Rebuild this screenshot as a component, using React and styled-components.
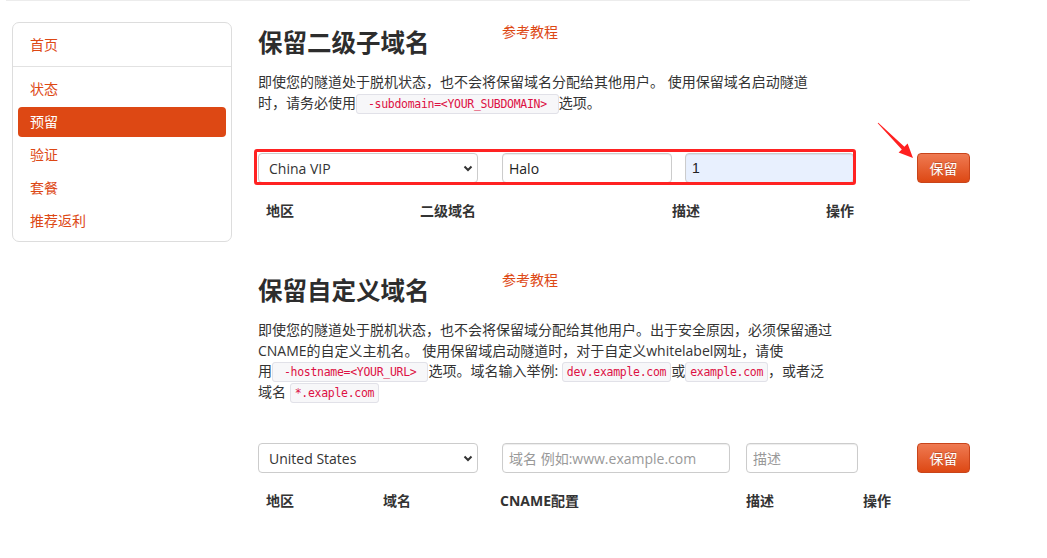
import React from 'react';
import styled, { createGlobalStyle } from 'styled-components';

const GlobalStyle = createGlobalStyle`
  body {
    margin: 0;
    background: #fff;
    color: #333;
    font-family: "Open Sans", "Noto Sans CJK SC", sans-serif;
    font-size: 14px;
  }
`;

const ORANGE = '#dd4814';

const TopLine = styled.div`
  height: 1px;
  margin-left: 6px;
  width: 964px;
  background: #ececec;
`;

const Layout = styled.div`
  display: flex;
  align-items: flex-start;
  gap: 26px;
  padding-left: 12px;
`;

const Sidebar = styled.nav`
  width: 220px;
  box-sizing: border-box;
  margin-top: 21px;
  padding: 7px 5px 5px;
  border: 1px solid #ddd;
  border-radius: 7px;
  display: flex;
  flex-direction: column;
  gap: 3px;
`;

const NavItem = styled.a`
  display: block;
  height: 30px;
  line-height: 30px;
  padding-left: 12px;
  border-radius: 4px;
  color: ${(p) => (p.$active ? '#fff' : ORANGE)};
  background: ${(p) => (p.$active ? ORANGE : 'transparent')};
  text-decoration: none;
  font-size: 14px;
`;

const NavDivider = styled.div`
  height: 1px;
  background: #e2e2e2;
  margin: 3px -5px 4px;
`;

const Main = styled.main`
  width: 712px;
`;

const SectionHead = styled.div`
  display: flex;
  align-items: flex-start;
  margin-top: ${(p) => p.$top}px;
`;

const Title = styled.h2`
  margin: 0;
  width: 244px;
  font-size: 24.5px;
  line-height: 36px;
  font-weight: 700;
  color: #2d2d2d;
`;

const GuideLink = styled.a`
  margin-top: -3px;
  line-height: 20px;
  font-size: 14px;
  color: ${ORANGE};
  text-decoration: none;
`;

const Para = styled.p`
  margin: 11px 0 0;
  width: 575px;
  line-height: 20.5px;
  font-size: 14px;
  color: #333;
`;

const Code = styled.code`
  font-family: "DejaVu Sans Mono", "Liberation Mono", monospace;
  font-size: 11.5px;
  letter-spacing: -0.3px;
  line-height: 12px;
  color: #dd1144;
  background: #f7f7f9;
  border: 1px solid #e1e1e8;
  border-radius: 3px;
  padding: 2px ${(p) => (p.$wide ? 11 : 4)}px;
  white-space: nowrap;
`;

const FormRow = styled.div`
  position: relative;
  display: flex;
  align-items: center;
  margin-top: ${(p) => p.$top}px;
  height: 30px;
`;

const SelectWrap = styled.div`
  position: relative;
  width: 220px;
  height: 30px;
  margin-right: 24px;
`;

const Select = styled.select`
  appearance: none;
  width: 100%;
  height: 30px;
  box-sizing: border-box;
  padding: 0 24px 0 10px;
  border: 1px solid #ccc;
  border-radius: 4px;
  background: #fff;
  color: #333;
  font-family: "Open Sans", "Noto Sans CJK SC", sans-serif;
  font-size: 14px;
`;

const Chevron = styled.svg`
  position: absolute;
  right: 5px;
  top: 12px;
  pointer-events: none;
`;

const Input = styled.input`
  width: ${(p) => p.$w}px;
  height: 30px;
  box-sizing: border-box;
  margin-right: ${(p) => p.$gap || 0}px;
  padding: 0 6px;
  border: 1px solid #ccc;
  border-radius: 4px;
  background: ${(p) => (p.$filled ? '#e8f0fe' : '#fff')};
  color: #222;
  font-family: ${(p) => (p.$filled ? '"Liberation Sans", Arial' : '"Open Sans"')}, "Noto Sans CJK SC", sans-serif;
  font-size: 14px;
  box-shadow: inset 0 1px 1px rgba(0, 0, 0, 0.075);
  &::placeholder {
    color: #999;
  }
`;

const SaveButton = styled.button`
  margin-left: auto;
  width: 53px;
  height: 30px;
  padding: 0;
  border: 1px solid #c9441a;
  border-radius: 4px;
  background: linear-gradient(to bottom, #ef7a52, #dd4814);
  color: #fff;
  font-family: "Noto Sans CJK SC", sans-serif;
  font-size: 14px;
  text-shadow: 0 -1px 0 rgba(0, 0, 0, 0.2);
`;

const Highlight = styled.div`
  position: absolute;
  left: -4px;
  top: -4px;
  width: 602px;
  height: 36px;
  box-sizing: border-box;
  border: 3px solid #ff2222;
  border-radius: 3px;
  pointer-events: none;
`;

const Arrow = styled.svg`
  position: absolute;
  left: 614px;
  top: -35px;
  pointer-events: none;
`;

const HeadRow = styled.div`
  display: grid;
  grid-template-columns: ${(p) => p.$cols};
  margin-top: 10px;
`;

const Th = styled.div`
  padding: 8px;
  line-height: 20px;
  font-weight: 700;
  font-size: 14px;
  color: #333;
`;

const navItems = ['状态', '预留', '验证', '套餐', '推荐返利'];

const SelectBox = ({ value }) => (
  <SelectWrap>
    <Select defaultValue={value}>
      <option>{value}</option>
    </Select>
    <Chevron width="10" height="7" viewBox="0 0 10 7">
      <polyline points="1.5,1.5 5,5 8.5,1.5" fill="none" stroke="#333" strokeWidth="2" />
    </Chevron>
  </SelectWrap>
);

export default function App() {
  return (
    <>
      <GlobalStyle />
      <TopLine />
      <Layout>
        <Sidebar>
          <NavItem href="#">首页</NavItem>
          <NavDivider />
          {navItems.map((item) => (
            <NavItem key={item} href="#" $active={item === '预留'}>
              {item}
            </NavItem>
          ))}
        </Sidebar>

        <Main>
          <SectionHead $top={24}>
            <Title>保留二级子域名</Title>
            <GuideLink href="#">参考教程</GuideLink>
          </SectionHead>
          <Para>
            即使您的隧道处于脱机状态，也不会将保留域名分配给其他用户。 使用保留域名启动隧道时，请务必使用
            <Code $wide>-subdomain=&lt;YOUR_SUBDOMAIN&gt;</Code>选项。
          </Para>
          <FormRow $top={40}>
            <SelectBox value="China VIP" />
            <Input $w={170} $gap={13} defaultValue="Halo" />
            <Input $w={169} $filled defaultValue="1" />
            <SaveButton>保留</SaveButton>
            <Highlight />
            <Arrow width="48" height="48" viewBox="0 0 48 48">
              <polygon
                points="6.3,4.7 32.4,28.8 35.6,25.6 41,40 26.6,34.6 29.8,31.4 5.7,5.3"
                fill="#ff2020"
              />
            </Arrow>
          </FormRow>
          <HeadRow $cols="154px 252px 154px 1fr">
            <Th>地区</Th>
            <Th>二级域名</Th>
            <Th>描述</Th>
            <Th>操作</Th>
          </HeadRow>

          <SectionHead $top={44}>
            <Title>保留自定义域名</Title>
            <GuideLink href="#">参考教程</GuideLink>
          </SectionHead>
          <Para>
            即使您的隧道处于脱机状态，也不会将保留域分配给其他用户。出于安全原因，必须保留通过CNAME的自定义主机名。 使用保留域启动隧道时，对于自定义whitelabel网址，请使用
            <Code $wide>-hostname=&lt;YOUR_URL&gt;</Code>选项。域名输入举例: <Code>dev.example.com</Code>或
            <Code>example.com</Code>，或者泛域名 <Code>*.exaple.com</Code>
          </Para>
          <FormRow $top={41}>
            <SelectBox value="United States" />
            <Input $w={228} $gap={16} placeholder="域名 例如:www.example.com" />
            <Input $w={112} placeholder="描述" />
            <SaveButton>保留</SaveButton>
          </FormRow>
          <HeadRow $cols="117px 117px 246px 117px 1fr">
            <Th>地区</Th>
            <Th>域名</Th>
            <Th>CNAME配置</Th>
            <Th>描述</Th>
            <Th>操作</Th>
          </HeadRow>
        </Main>
      </Layout>
    </>
  );
}
